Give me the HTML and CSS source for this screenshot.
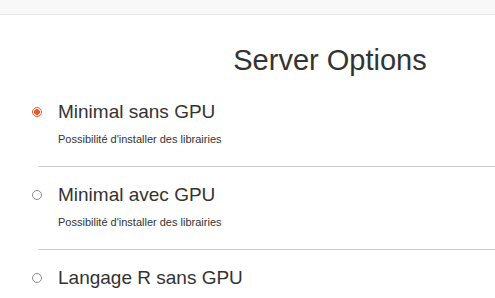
FILE: index.html
```html
<!DOCTYPE html>
<html lang="fr">
<head>
<meta charset="UTF-8">
<meta name="viewport" content="width=device-width, initial-scale=1.0">
<title>Server Options</title>
<link rel="stylesheet" href="styles.css">
</head>
<body>

<div class="topbar"></div>

<form class="spawn">
  <h1>Server Options</h1>

  <label class="option">
    <input type="radio" name="profile" value="minimal" checked>
    <span class="option-text">
      <span class="option-name">Minimal sans GPU</span>
      <span class="option-desc">Possibilité d'installer des librairies</span>
    </span>
  </label>

  <hr class="divider">

  <label class="option">
    <input type="radio" name="profile" value="minimal-gpu">
    <span class="option-text">
      <span class="option-name">Minimal avec GPU</span>
      <span class="option-desc">Possibilité d'installer des librairies</span>
    </span>
  </label>

  <hr class="divider">

  <label class="option">
    <input type="radio" name="profile" value="r">
    <span class="option-text">
      <span class="option-name">Langage R sans GPU</span>
    </span>
  </label>
</form>

</body>
</html>
```

FILE: styles.css
```css
html, body {
  margin: 0;
  overflow: hidden;
}

body {
  font-family: "Liberation Sans", Arial, sans-serif;
  color: #333;
  background: #fff;
}

.topbar {
  height: 14px;
  background: #f8f8f8;
  border-bottom: 1px solid #e7e7e7;
}

.spawn {
  width: 463px;
  padding-left: 32px;
  overflow: hidden;
}

h1 {
  width: 596px;
  margin: 30px 0 21px;
  font-size: 29px;
  font-weight: normal;
  line-height: 1.1;
  text-align: center;
}

.option {
  display: flex;
  align-items: flex-start;
  gap: 16px;
  cursor: pointer;
}

.option input {
  appearance: none;
  -webkit-appearance: none;
  width: 10px;
  height: 10px;
  margin: 9px 0 0;
  border: 1px solid #8a8a8a;
  border-radius: 50%;
  background: #fff;
  flex-shrink: 0;
}

.option input:checked {
  border-color: #e9582b;
  background: radial-gradient(circle, #e9582b 0 2.6px, #fff 3.2px);
}

.option-text {
  display: flex;
  flex-direction: column;
}

.option-name {
  padding-top: 2px;
  font-size: 19px;
  line-height: 24px;
}

.option-desc {
  margin-top: 7px;
  font-size: 11px;
  line-height: 16px;
}

.divider {
  margin: 19px 0 14px 6px;
  border: 0;
  border-top: 1px solid #ccc;
}
```
